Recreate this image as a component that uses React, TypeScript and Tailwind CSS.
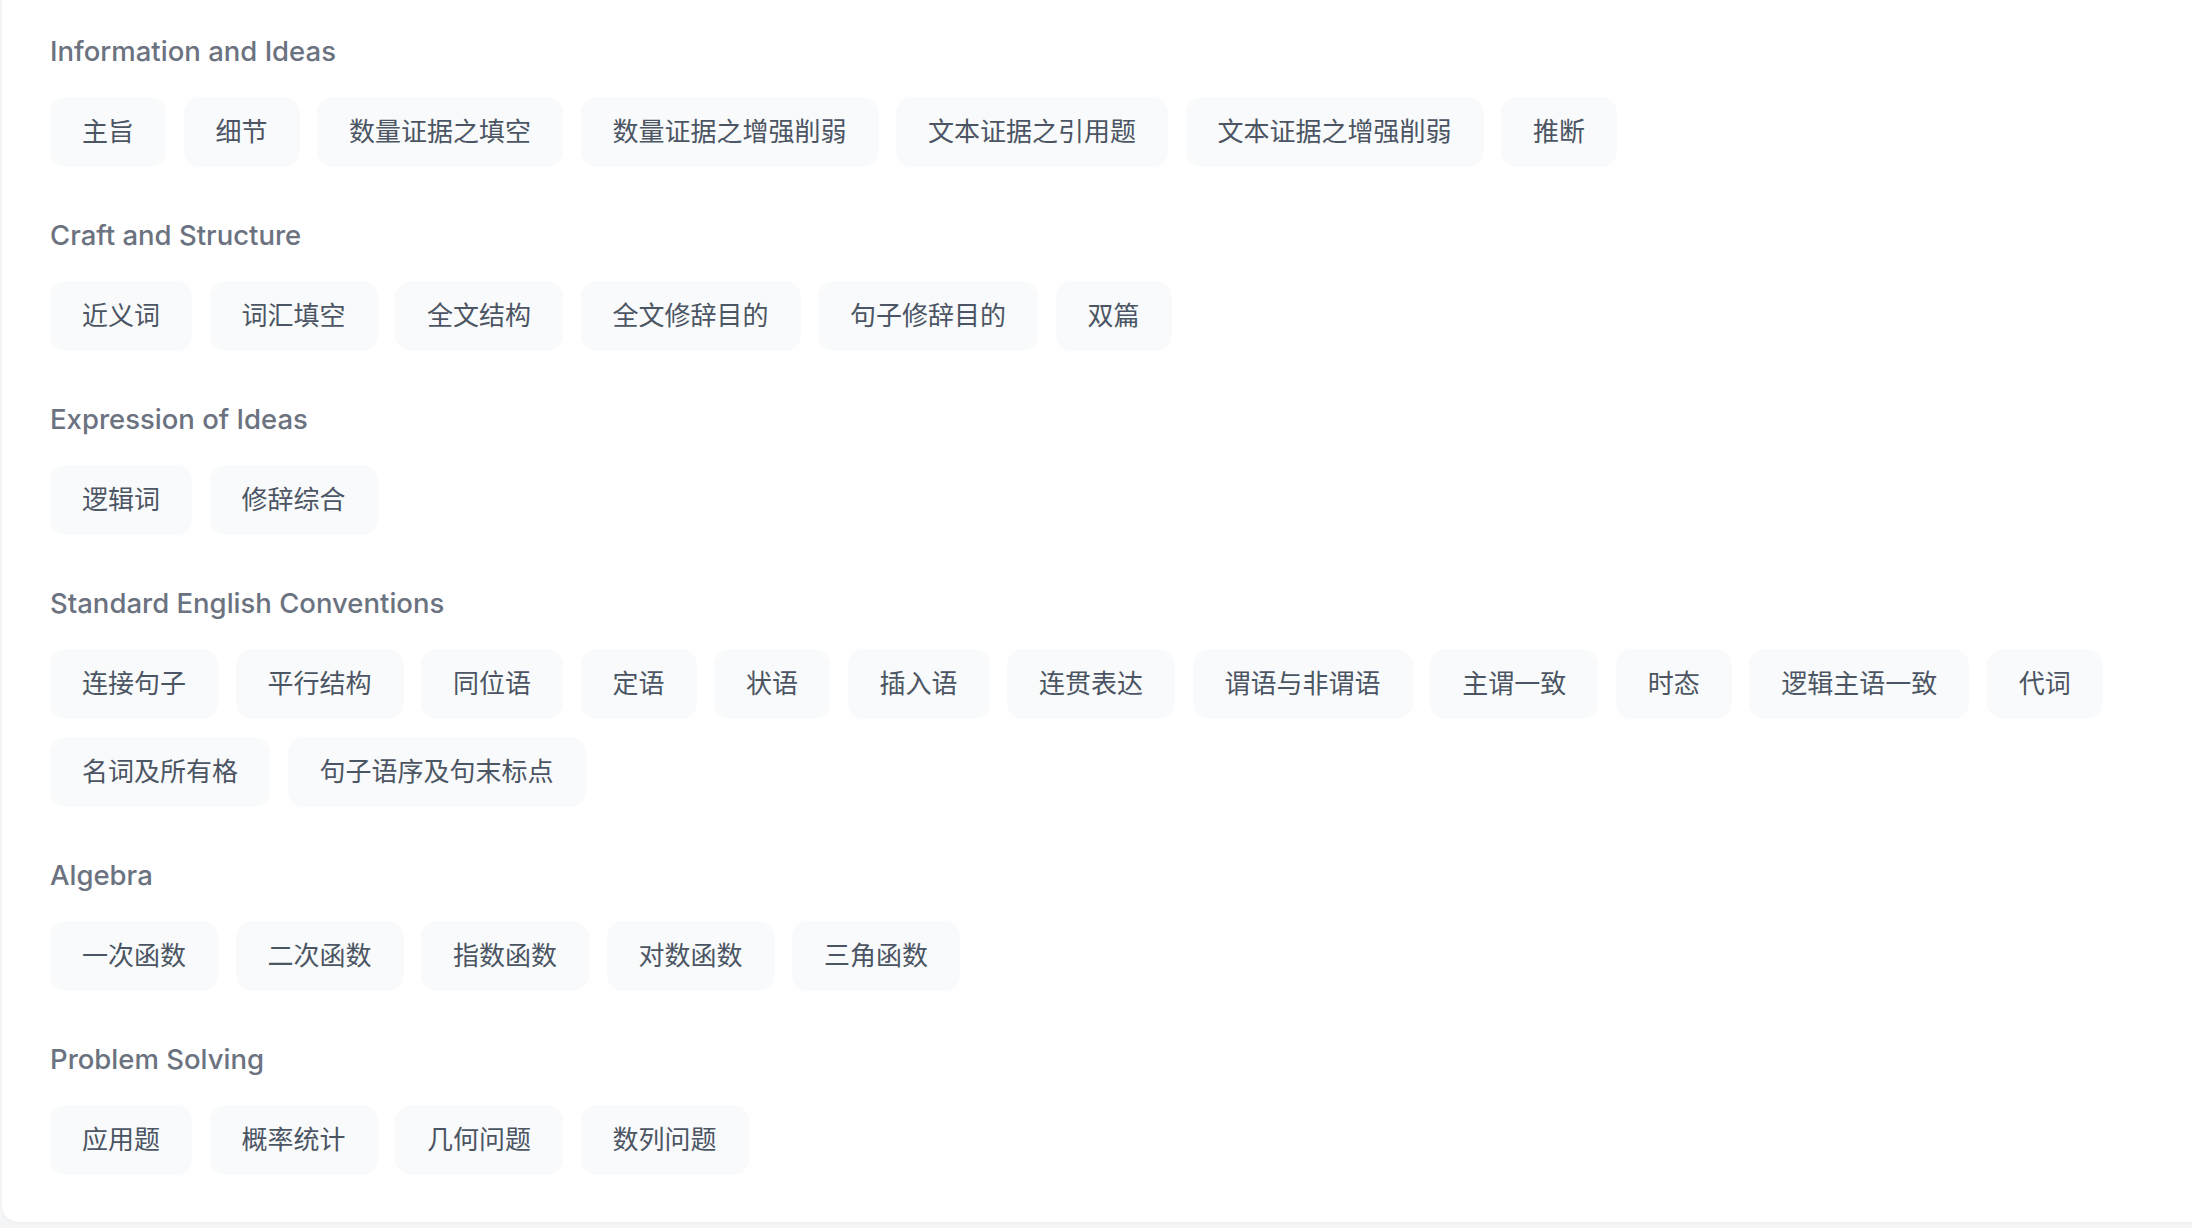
import React from 'react';

interface TopicGroup {
  title: string;
  tags: string[];
}

const groups: TopicGroup[] = [
  {
    title: 'Information and Ideas',
    tags: ['主旨', '细节', '数量证据之填空', '数量证据之增强削弱', '文本证据之引用题', '文本证据之增强削弱', '推断'],
  },
  {
    title: 'Craft and Structure',
    tags: ['近义词', '词汇填空', '全文结构', '全文修辞目的', '句子修辞目的', '双篇'],
  },
  {
    title: 'Expression of Ideas',
    tags: ['逻辑词', '修辞综合'],
  },
  {
    title: 'Standard English Conventions',
    tags: [
      '连接句子',
      '平行结构',
      '同位语',
      '定语',
      '状语',
      '插入语',
      '连贯表达',
      '谓语与非谓语',
      '主谓一致',
      '时态',
      '逻辑主语一致',
      '代词',
      '名词及所有格',
      '句子语序及句末标点',
    ],
  },
  {
    title: 'Algebra',
    tags: ['一次函数', '二次函数', '指数函数', '对数函数', '三角函数'],
  },
  {
    title: 'Problem Solving',
    tags: ['应用题', '概率统计', '几何问题', '数列问题'],
  },
];

const fontStack = 'font-["Inter","Noto_Sans_CJK_SC",sans-serif]';

const TagChip: React.FC<{ label: string }> = ({ label }) => (
  <button
    type="button"
    className="rounded-[16px] bg-[#f9fafb] px-[32px] py-[16px] text-[26px] leading-[38px] text-[#4b5563] hover:bg-[#f3f4f6] transition-colors"
  >
    {label}
  </button>
);

export default function App() {
  return (
    <div className={`min-h-screen bg-[#f4f5f7] pl-[2px] pb-[5px] ${fontStack}`}>
      <div className="flex flex-col gap-[48px] rounded-bl-[16px] bg-white pt-[31px] pb-[47px] pl-[48px] pr-[48px] shadow-[0_1px_3px_rgba(0,0,0,0.04)]">
        {groups.map((group) => (
          <section key={group.title}>
            <h3 className="mb-[26px] text-[27.5px] leading-[40px] font-medium text-[#6b7280]">
              {group.title}
            </h3>
            <div className="flex flex-wrap gap-x-[17.5px] gap-y-[18px]">
              {group.tags.map((tag) => (
                <TagChip key={tag} label={tag} />
              ))}
            </div>
          </section>
        ))}
      </div>
    </div>
  );
}
